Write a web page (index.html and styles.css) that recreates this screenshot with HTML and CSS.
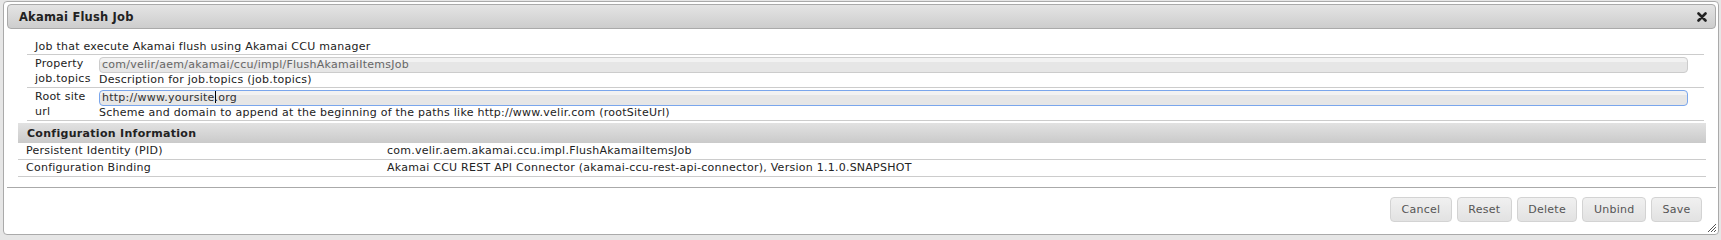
FILE: index.html
```html
<!DOCTYPE html>
<html lang="en">
<head>
  <meta charset="UTF-8" />
  <meta name="viewport" content="width=device-width, initial-scale=1.0" />
  <title>Akamai Flush Job</title>
  <link rel="stylesheet" href="styles.css">
</head>
<body>
  <div class="dialog">
    <div class="titlebar">
      <span class="title">Akamai Flush Job</span>
      <svg class="close" width="10" height="10" viewBox="0 0 10 10">
        <path d="M1.5 1.5 L8.5 8.5 M8.5 1.5 L1.5 8.5" stroke="#222" stroke-width="2.6" stroke-linecap="round" />
      </svg>
    </div>

    <div class="content">
      <table class="props">
        <tr>
          <td colspan="2" class="desc">Job that execute Akamai flush using Akamai CCU manager</td>
        </tr>
        <tr>
          <td class="label">Property job.topics</td>
          <td class="field">
            <div class="input readonly">com/velir/aem/akamai/ccu/impl/FlushAkamaiItemsJob</div>
            <div class="hint">Description for job.topics (job.topics)</div>
          </td>
        </tr>
        <tr>
          <td class="label">Root site url</td>
          <td class="field">
            <div class="input focused">http://www.yoursite<span class="caret"></span>.org</div>
            <div class="hint">Scheme and domain to append at the beginning of the paths like http://www.velir.com (rootSiteUrl)</div>
          </td>
        </tr>
      </table>

      <table class="info">
        <tr>
          <th colspan="2">Configuration Information</th>
        </tr>
        <tr>
          <td class="key">Persistent Identity (PID)</td>
          <td>com.velir.aem.akamai.ccu.impl.FlushAkamaiItemsJob</td>
        </tr>
        <tr>
          <td class="key">Configuration Binding</td>
          <td>Akamai CCU REST API Connector (akamai-ccu-rest-api-connector), Version 1.1.0.SNAPSHOT</td>
        </tr>
      </table>
    </div>

    <div class="buttons">
      <button>Cancel</button>
      <button>Reset</button>
      <button>Delete</button>
      <button>Unbind</button>
      <button>Save</button>
    </div>

    <svg class="grip" width="12" height="12" viewBox="0 0 12 12">
      <path d="M11 3 L3 11 M11 6 L6 11 M11 9 L9 11" stroke="#555" stroke-width="1" />
    </svg>
  </div>
</body>
</html>
```

FILE: styles.css
```css
body {
  margin: 0;
  background: #e6e6e6;
  font-family: "DejaVu Sans", Verdana, sans-serif;
  font-size: 11px;
  letter-spacing: 0.25px;
  color: #222;
}

.dialog {
  position: relative;
  box-sizing: border-box;
  width: 1716px;
  margin: 1px 0 0 3px;
  padding: 2px 2px 0 3px;
  border: 1px solid #aaa;
  border-radius: 4px;
  background: #fff;
}

.titlebar {
  display: flex;
  align-items: center;
  justify-content: space-between;
  box-sizing: border-box;
  height: 25px;
  padding: 0 8px 0 11px;
  border: 1px solid #aaa;
  border-radius: 4px;
  background: linear-gradient(#e4e4e4, #cdcdcd);
}

.title {
  font-size: 11.5px;
  font-weight: bold;
  letter-spacing: 0.2px;
}

.content {
  padding: 10px 0 10px 0;
}

table {
  border-collapse: collapse;
  border-spacing: 0;
}

.props {
  width: 1677px;
  margin-left: 20px;
}

.props td {
  padding: 0;
  border-bottom: 1px solid #ccc;
  vertical-align: top;
  line-height: 15px;
}

.props .desc {
  padding-left: 8px;
}

.props .label {
  width: 64px;
  padding: 1px 0 0 8px;
}

.props .field {
  padding: 2px 16px 0 0;
}

.input {
  box-sizing: border-box;
  height: 16px;
  padding: 0 2px;
  border: 1px solid #ccc;
  border-radius: 4px;
  background: linear-gradient(#f2f2f2 0, #f2f2f2 30%, #e6e6e6 31%, #e6e6e6);
  line-height: 14px;
  color: #333;
}

.input.readonly {
  color: #666;
}

.input.focused {
  border-color: #7aa6ec;
}

.caret {
  display: inline-block;
  width: 1px;
  height: 12px;
  margin-right: -1px;
  background: #000;
  vertical-align: -2px;
}

.hint {
  line-height: 14px;
}

.info {
  width: 1688px;
  margin: 2px 0 0 11px;
}

.info th {
  height: 20px;
  padding: 0 9px;
  text-align: left;
  font-weight: bold;
  letter-spacing: 0.3px;
  background: linear-gradient(#e2e2e2, #cacaca);
}

.info td {
  height: 16px;
  padding: 0 8px;
  border-bottom: 1px solid #ccc;
  line-height: 16px;
}

.info .key {
  width: 345px;
}

.buttons {
  display: flex;
  justify-content: flex-end;
  gap: 5px;
  padding: 9px 14px 12px 0;
  border-top: 1px solid #aaa;
}

button {
  height: 25px;
  padding: 0 10.5px;
  border: 1px solid #d3d3d3;
  border-radius: 4px;
  background: linear-gradient(#f0f0f0, #e2e2e2);
  font-family: "DejaVu Sans", Verdana, sans-serif;
  font-size: 11px;
  letter-spacing: 0.25px;
  color: #555;
}

.grip {
  position: absolute;
  right: 1px;
  bottom: 1px;
}
```
